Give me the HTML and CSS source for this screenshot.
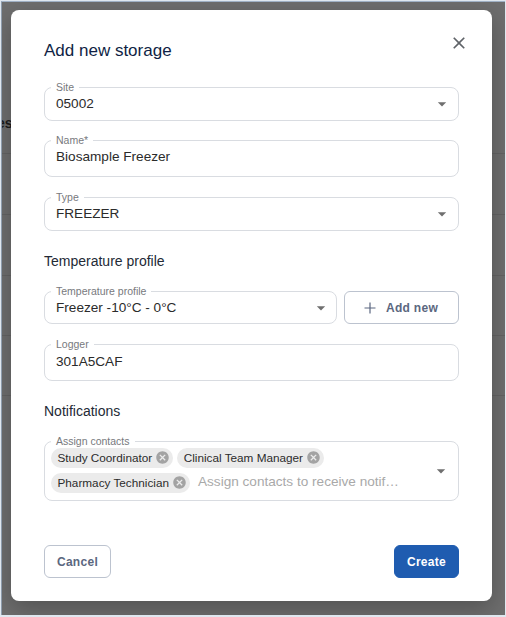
FILE: index.html
```html
<!DOCTYPE html>
<html lang="en">
<head>
    <meta charset="UTF-8">
    <meta name="viewport" content="width=device-width, initial-scale=1.0">
    <title>Add new storage</title>
    <link rel="stylesheet" href="styles.css">
</head>
<body>
    <div class="backdrop">
        <span class="behind-text">es</span>
        <div class="behind-line line-1"></div>
        <div class="behind-line line-2"></div>
        <div class="behind-line line-3"></div>
        <div class="behind-line line-4"></div>
        <div class="behind-line line-5"></div>

        <div class="dialog">
            <div class="dialog-head">
                <h2 class="dialog-title">Add new storage</h2>
                <button class="close-button" aria-label="Close">
                    <svg width="20" height="20" viewBox="0 0 24 24"><path d="M19 6.41 17.59 5 12 10.59 6.41 5 5 6.41 10.59 12 5 17.59 6.41 19 12 13.41 17.59 19 19 17.59 13.41 12z"/></svg>
                </button>
            </div>

            <div class="field field-select site-field">
                <label class="field-label">Site</label>
                <span class="field-value">05002</span>
                <svg class="arrow" viewBox="0 0 24 24"><path d="M7 10l5 5 5-5z"/></svg>
            </div>

            <div class="field name-field">
                <label class="field-label">Name*</label>
                <span class="field-value">Biosample Freezer</span>
            </div>

            <div class="field field-select type-field">
                <label class="field-label">Type</label>
                <span class="field-value">FREEZER</span>
                <svg class="arrow" viewBox="0 0 24 24"><path d="M7 10l5 5 5-5z"/></svg>
            </div>

            <h3 class="section-title temperature-title">Temperature profile</h3>

            <div class="profile-row">
                <div class="field field-select profile-field">
                    <label class="field-label">Temperature profile</label>
                    <span class="field-value">Freezer -10°C - 0°C</span>
                    <svg class="arrow profile-arrow" viewBox="0 0 24 24"><path d="M7 10l5 5 5-5z"/></svg>
                </div>
                <button class="button button-outline add-button">
                    <svg width="14" height="14" viewBox="0 0 14 14"><path d="M7 1.5v11M1.5 7h11"/></svg>
                    Add new
                </button>
            </div>

            <div class="field logger-field">
                <label class="field-label">Logger</label>
                <span class="field-value">301A5CAF</span>
            </div>

            <h3 class="section-title notifications-title">Notifications</h3>

            <div class="field contacts-field">
                <label class="field-label">Assign contacts</label>
                <div class="chips">
                    <span class="chip">Study Coordinator
                        <svg class="chip-icon" viewBox="0 0 24 24"><path d="M12 2C6.47 2 2 6.47 2 12s4.47 10 10 10 10-4.47 10-10S17.53 2 12 2zm5 13.59L15.59 17 12 13.41 8.41 17 7 15.59 10.59 12 7 8.41 8.41 7 12 10.59 15.59 7 17 8.41 13.41 12 17 15.59z"/></svg>
                    </span>
                    <span class="chip">Clinical Team Manager
                        <svg class="chip-icon" viewBox="0 0 24 24"><path d="M12 2C6.47 2 2 6.47 2 12s4.47 10 10 10 10-4.47 10-10S17.53 2 12 2zm5 13.59L15.59 17 12 13.41 8.41 17 7 15.59 10.59 12 7 8.41 8.41 7 12 10.59 15.59 7 17 8.41 13.41 12 17 15.59z"/></svg>
                    </span>
                    <span class="chip">Pharmacy Technician
                        <svg class="chip-icon" viewBox="0 0 24 24"><path d="M12 2C6.47 2 2 6.47 2 12s4.47 10 10 10 10-4.47 10-10S17.53 2 12 2zm5 13.59L15.59 17 12 13.41 8.41 17 7 15.59 10.59 12 7 8.41 8.41 7 12 10.59 15.59 7 17 8.41 13.41 12 17 15.59z"/></svg>
                    </span>
                    <span class="placeholder">Assign contacts to receive notif…</span>
                </div>
                <svg class="arrow contacts-arrow" viewBox="0 0 24 24"><path d="M7 10l5 5 5-5z"/></svg>
            </div>

            <div class="dialog-actions">
                <button class="button button-outline cancel-button">Cancel</button>
                <button class="button button-primary create-button">Create</button>
            </div>
        </div>
    </div>
</body>
</html>
```

FILE: styles.css
```css
html, body {
    margin: 0;
    padding: 0;
    background-color: #dfe7ef;
}
body {
    font-family: "Liberation Sans", Arial, sans-serif;
    width: 506px;
    height: 617px;
    overflow: hidden;
}
.backdrop {
    position: relative;
    box-sizing: border-box;
    width: 504px;
    height: 614px;
    margin: 1px 0 0 1px;
    padding: 8px 0 0 9px;
    background-color: #6e6e6e;
    border-top: 1px solid #9fb0c4;
    border-left: 1px solid #8d9bab;
    overflow: hidden;
}
.behind-text {
    position: absolute;
    left: -5px;
    top: 113px;
    font-size: 14px;
    font-weight: bold;
    color: #1c1c1c;
}
.behind-line {
    position: absolute;
    left: 0;
    right: 0;
    height: 1px;
    background-color: #636363;
}
.line-1 { top: 151px; }
.line-2 { top: 212px; }
.line-3 { top: 273px; }
.line-4 { top: 333px; }
.line-5 { top: 393px; }

.dialog {
    position: relative;
    box-sizing: border-box;
    width: 481px;
    height: 591px;
    padding: 0 33px;
    background-color: #ffffff;
    border-radius: 8px;
    box-shadow: 0 8px 24px rgba(0, 0, 0, 0.25);
}
.dialog-head {
    display: flex;
    justify-content: space-between;
    height: 77px;
}
.dialog-title {
    margin: 31px 0 0;
    font-size: 17px;
    line-height: 20px;
    font-weight: normal;
    color: #0f1f45;
}
.close-button {
    position: absolute;
    top: 23px;
    right: 23px;
    width: 20px;
    height: 20px;
    padding: 0;
    border: none;
    background: none;
    cursor: pointer;
}
.close-button svg {
    display: block;
    fill: #5f6368;
}

.field {
    position: relative;
    box-sizing: border-box;
    display: flex;
    align-items: center;
    padding: 0 11px;
    border: 1px solid #d9dce1;
    border-radius: 8px;
    background-color: #ffffff;
}
.field-label {
    position: absolute;
    top: -7px;
    left: 6px;
    padding: 0 5px;
    font-size: 10.5px;
    line-height: 13px;
    color: #77797d;
    background-color: #ffffff;
}
.field-value {
    font-size: 13.6px;
    line-height: 16px;
    color: #2b2b2b;
}
.arrow {
    position: absolute;
    right: 6px;
    top: 50%;
    width: 20px;
    height: 20px;
    margin-top: -10px;
    fill: #6f6f6f;
}
.profile-arrow { right: 5px; }
.contacts-arrow { right: 7px; }
.site-field { height: 34px; }
.name-field { height: 37px; margin-top: 19px; }
.type-field { height: 34px; margin-top: 20px; }
.logger-field { height: 37px; margin-top: 20px; }
.site-field .field-value { margin-top: -1px; }
.name-field .field-value { margin-top: -3px; }
.logger-field .field-value { margin-top: -2px; }

.section-title {
    margin: 0;
    font-size: 14px;
    line-height: 16px;
    font-weight: normal;
    color: #232a36;
}
.temperature-title { margin-top: 22px; }
.notifications-title { margin-top: 22px; }

.profile-row {
    display: flex;
    gap: 7px;
    margin-top: 22px;
}
.profile-field {
    flex: 1;
    height: 33px;
}

.button {
    box-sizing: border-box;
    display: inline-flex;
    align-items: center;
    justify-content: center;
    font-family: "Liberation Sans", Arial, sans-serif;
    font-size: 12px;
    font-weight: bold;
    border-radius: 6px;
    letter-spacing: 0.3px;
    cursor: pointer;
}
.button-outline {
    background-color: #ffffff;
    color: #5b6780;
    border: 1px solid #bcc3cf;
}
.button-primary {
    background-color: #1f5cb0;
    color: #ffffff;
    border: 1px solid #1f5cb0;
}
.add-button {
    width: 115px;
    height: 33px;
    gap: 9px;
    padding: 0 2px 0 0;
}
.add-button svg {
    fill: none;
    stroke: #5b6780;
    stroke-width: 1.2;
}

.contacts-field {
    height: 60px;
    margin-top: 22px;
    padding: 0 28px 0 6px;
}
.chips {
    display: flex;
    flex-wrap: wrap;
    align-items: center;
    gap: 5px 4px;
    margin-top: -2px;
}
.chip {
    display: inline-flex;
    align-items: center;
    gap: 3px;
    box-sizing: border-box;
    height: 20px;
    padding: 0 3px 0 6.5px;
    border-radius: 10px;
    background-color: #ebebeb;
    font-size: 11.75px;
    color: #2b2b2b;
}
.chip-icon {
    width: 15px;
    height: 15px;
    fill: #a3a3a3;
}
.placeholder {
    margin: -3px 0 0 4px;
    font-size: 13.6px;
    color: #a9a9a9;
    white-space: nowrap;
}

.dialog-actions {
    display: flex;
    justify-content: space-between;
    margin-top: 44px;
}
.cancel-button {
    width: 67px;
    height: 33px;
}
.create-button {
    width: 65px;
    height: 33px;
}
```
